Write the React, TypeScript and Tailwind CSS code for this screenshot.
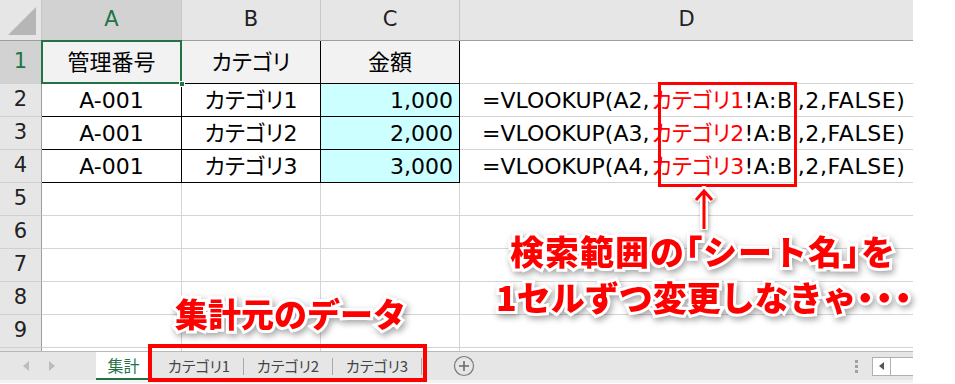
import React from 'react';

const jp = "font-['Noto_Sans_CJK_JP','Noto_Sans',sans-serif] [font-feature-settings:'palt']";
const cellFont = "font-['DejaVu_Sans','Noto_Sans_CJK_JP',sans-serif]";

const rowHead =
    'w-[42px] shrink-0 flex items-center justify-center bg-[#e6e6e6] border-r border-b border-r-[#9e9e9e] border-b-[#d0d0d0] text-[21px] text-[#222]';

const dataRows = [
    { n: 2, a: 'A-001', b: 'カテゴリ1', c: '1,000', ref: 'A2', cat: 'カテゴリ1' },
    { n: 3, a: 'A-001', b: 'カテゴリ2', c: '2,000', ref: 'A3', cat: 'カテゴリ2' },
    { n: 4, a: 'A-001', b: 'カテゴリ3', c: '3,000', ref: 'A4', cat: 'カテゴリ3' },
];

const callout =
    "font-['Noto_Sans_CJK_JP',sans-serif] [font-feature-settings:normal] text-[#ff0000] font-black [paint-order:stroke_fill] [-webkit-text-stroke:6px_white] drop-shadow-[2px_3px_3px_rgba(0,0,0,0.35)] whitespace-nowrap";
const narrow = "[font-feature-settings:'palt']";

const Tab = ({ label }: { label: string }) => (
    <div className="flex items-center">
        <div className="w-[88px] flex items-center justify-center text-[15px] text-[#444]">{label}</div>
        <div className="w-px h-[17px] bg-[#a8a8a8]" />
    </div>
);

const App = () => {
    return (
        <div className={`relative w-[955px] h-[384px] bg-white overflow-hidden ${jp}`}>
            <div className="w-[913px]">
                {/* column headers */}
                <div className={`flex h-[41px] bg-[#e6e6e6] text-[21px] text-[#222] ${cellFont}`}>
                    <div className="w-[42px] shrink-0 relative border-r border-b border-r-[#c8c8c8] border-b-[#9e9e9e]">
                        <svg className="absolute left-[6px] top-[5px]" width="32" height="32" viewBox="0 0 32 32">
                            <polygon points="2,30 30,30 30,2" fill="#b6b6b6" />
                        </svg>
                    </div>
                    <div className="w-[140px] shrink-0 flex items-center justify-center bg-[#d2d2d2] text-[#217346] border-r border-b border-r-[#c8c8c8] border-b-[#217346]">A</div>
                    <div className="w-[139px] shrink-0 flex items-center justify-center border-r border-b border-r-[#c8c8c8] border-b-[#9e9e9e]">B</div>
                    <div className="w-[139px] shrink-0 flex items-center justify-center border-r border-b border-r-[#c8c8c8] border-b-[#9e9e9e]">C</div>
                    <div className="flex-1 flex items-center justify-center border-b border-b-[#9e9e9e]">D</div>
                </div>

                {/* row 1 */}
                <div className={`flex h-[43px] text-[22px] text-black ${cellFont}`}>
                    <div className={`${rowHead} !bg-[#d2d2d2] !text-[#217346] border-r-[#217346]`}>1</div>
                    <div className="relative w-[140px] shrink-0 flex items-center justify-center bg-[#f2f2f2] border-r border-b border-black">
                        管理番号
                        <div className="absolute -left-px -top-px -right-px -bottom-px border-2 border-[#217346]" />
                        <div className="absolute -right-[4px] -bottom-[4px] w-[6px] h-[6px] bg-[#217346] border border-white" />
                    </div>
                    <div className="w-[139px] shrink-0 flex items-center justify-center bg-[#f2f2f2] border-r border-b border-black">カテゴリ</div>
                    <div className="w-[139px] shrink-0 flex items-center justify-center bg-[#f2f2f2] border-r border-b border-black">金額</div>
                    <div className="flex-1 border-b border-[#d4d4d4]" />
                </div>

                {/* rows 2-4 */}
                {dataRows.map((r) => (
                    <div key={r.n} className={`flex h-[33px] text-[22px] text-black ${cellFont}`}>
                        <div className={rowHead}>{r.n}</div>
                        <div className="w-[140px] shrink-0 flex items-center justify-center border-r border-b border-black">{r.a}</div>
                        <div className="w-[139px] shrink-0 flex items-center justify-center border-r border-b border-black">{r.b}</div>
                        <div className="w-[139px] shrink-0 flex items-center justify-end pr-[6px] bg-[#ccffff] border-r border-b border-black">{r.c}</div>
                        <div className="flex-1 flex items-center pl-[22px] whitespace-nowrap border-b border-[#d4d4d4]">
                            <span>=VLOOKUP({r.ref},</span>
                            <span className="text-[#ff0000] pl-[2px]">{r.cat}</span>
                            <span className="tracking-[0.6px]">!A:B</span>
                            <span className="ml-[5px] tracking-[0.6px]">,2,FALSE)</span>
                        </div>
                    </div>
                ))}

                {/* rows 5-9 */}
                {[5, 6, 7, 8, 9].map((n) => (
                    <div key={n} className={`flex h-[33px] ${cellFont}`}>
                        <div className={rowHead}>{n}</div>
                        <div className="w-[140px] shrink-0 border-r border-b border-[#d4d4d4]" />
                        <div className="w-[139px] shrink-0 border-r border-b border-[#d4d4d4]" />
                        <div className="w-[139px] shrink-0 border-r border-b border-[#d4d4d4]" />
                        <div className="flex-1 border-b border-[#d4d4d4]" />
                    </div>
                ))}

                <div className="flex h-[3px]">
                    <div className="w-[42px] shrink-0 bg-[#e6e6e6] border-r border-[#9e9e9e]" />
                    <div className="w-[140px] shrink-0 border-r border-[#d4d4d4]" />
                    <div className="w-[139px] shrink-0 border-r border-[#d4d4d4]" />
                    <div className="w-[139px] shrink-0 border-r border-[#d4d4d4]" />
                </div>

                {/* sheet tabs */}
                <div className="flex h-[29px] bg-[#e6e6e6] border-t border-[#b8b8b8]">
                    <div className="w-[96px] shrink-0 flex items-center gap-[20px] pl-[23px]">
                        <svg width="6" height="10" viewBox="0 0 6 10"><polygon points="6,0 6,10 0,5" fill="#bdbdbd" /></svg>
                        <svg width="6" height="10" viewBox="0 0 6 10"><polygon points="0,0 0,10 6,5" fill="#bdbdbd" /></svg>
                    </div>
                    <div className="w-[55px] shrink-0 flex items-center justify-center bg-white text-[16px] text-[#217346] border-b-2 border-[#217346]">集計</div>
                    <div className="w-[4px]" />
                    <Tab label="カテゴリ1" />
                    <Tab label="カテゴリ2" />
                    <Tab label="カテゴリ3" />
                    <div className="w-[31px]" />
                    <div className="flex items-center">
                        <svg width="22" height="22" viewBox="0 0 22 22">
                            <circle cx="11" cy="11" r="9.5" fill="none" stroke="#7a7a7a" strokeWidth="1.2" />
                            <path d="M11 6v10M6 11h10" stroke="#6a6a6a" strokeWidth="1.6" />
                        </svg>
                    </div>
                    <div className="flex-1" />
                    <div className="flex flex-col justify-center gap-[2px] mr-[14px]">
                        <div className="w-[3px] h-[3px] bg-[#a0a0a0]" />
                        <div className="w-[3px] h-[3px] bg-[#a0a0a0]" />
                        <div className="w-[3px] h-[3px] bg-[#a0a0a0]" />
                    </div>
                    <div className="flex items-center">
                        <div className="w-[19px] h-[19px] bg-white border border-[#b0b0b0] flex items-center justify-center">
                            <svg width="5" height="8" viewBox="0 0 5 8"><polygon points="5,0 5,8 0,4" fill="#555" /></svg>
                        </div>
                        <div className="w-[22px] h-[19px] bg-white border-y border-[#b0b0b0]" />
                    </div>
                </div>
                <div className="h-[3px] bg-[#f3f3f3]" />
            </div>

            {/* annotations */}
            <div className="absolute left-[658px] top-[82px] w-[139px] h-[105px] border-[3px] border-[#ff0000]" />
            <div className="absolute left-[148px] top-[344px] w-[279px] h-[38px] border-[4px] border-[#ff0000]" />

            <svg className="absolute left-[692px] top-[186px] drop-shadow-[1px_2px_2px_rgba(0,0,0,0.35)]" width="24" height="46" viewBox="0 0 24 46">
                <path d="M12 44V6M3 14l9-10 9 10" fill="none" stroke="white" strokeWidth="8" strokeLinejoin="round" />
                <path d="M12 43V6M4 14l8-9 8 9" fill="none" stroke="#ff0000" strokeWidth="3" />
            </svg>

            <div className={`absolute left-[496px] top-[228px] w-[414px] text-[34px] leading-[46px] ${callout}`}>
                <div className="text-center tracking-[1px]">
                    検索範囲の<span className={narrow}>「</span>シート名<span className={narrow}>」</span>を
                </div>
                <div className="text-center">
                    1セルずつ変更しなきゃ<span className={`${narrow} tracking-[2px]`}>・・・</span>
                </div>
            </div>

            <div className={`absolute left-[175px] top-[289px] text-[33px] leading-[48px] ${callout}`}>集計元のデータ</div>
        </div>
    );
};

export default App;
